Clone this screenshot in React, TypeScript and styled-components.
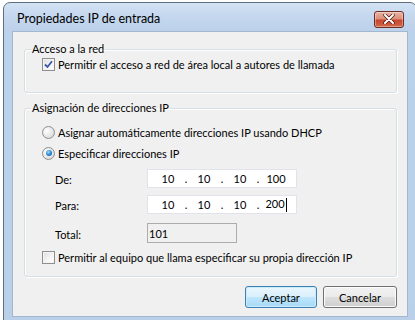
import { createGlobalStyle, styled } from "styled-components";

const GlobalStyle = createGlobalStyle`
  html, body {
    margin: 0;
    padding: 0;
    background: #ffffff;
  }
  body {
    font-family: Lato, "Liberation Sans", sans-serif;
    font-size: 11px;
    color: #000;
  }
`;

const Screen = styled.div`
  width: 415px;
  height: 320px;
  overflow: hidden;
  padding: 2px 0 0 3px;
  box-sizing: border-box;
`;

const Window = styled.div`
  width: 414px;
  height: 324px;
  box-sizing: border-box;
  border: 1px solid #5f6f82;
  border-radius: 7px 7px 0 0;
  background: linear-gradient(180deg, #d3e2f4 0px, #c4d7ee 14px, #bcd2ea 28px, #bad0e9 100%);
  display: flex;
  flex-direction: column;
  padding: 0 8px 8px 8px;
`;

const TitleBar = styled.div`
  height: 28px;
  display: flex;
  align-items: center;
  justify-content: space-between;
  padding: 0 4px 0 5px;
`;

const Title = styled.span`
  font-size: 12.5px;
  color: #000;
  margin-top: 2px;
`;

const CloseButton = styled.button`
  width: 30px;
  height: 17px;
  margin-top: 4px;
  padding: 0;
  border: 1px solid #6e2c22;
  border-radius: 3px;
  background: linear-gradient(180deg, #e8b3a4 0%, #dd8f7b 45%, #c6462c 55%, #cf6a4b 100%);
  box-shadow: inset 0 0 0 1px rgba(255, 255, 255, 0.35);
  display: flex;
  align-items: center;
  justify-content: center;
`;

const Client = styled.div`
  flex: 1;
  background: #f0f0f0;
  border: 1px solid #a3b7cf;
  padding: 9px 10px 0 11px;
  display: flex;
  flex-direction: column;
`;

const Group = styled.fieldset<{ $gap?: number }>`
  margin: ${(p) => p.$gap ?? 0}px 0 0 0;
  padding: 0 0 ${(p) => (p.$gap ? 12 : 21)}px 17px;
  border: 1px solid #d5dfe5;
  border-radius: 3px;
  box-shadow: inset 1px 1px 0 #ffffff, 1px 1px 0 #ffffff;
  display: flex;
  flex-direction: column;
`;

const Legend = styled.legend`
  padding: 0 1px;
  margin-left: -11px;
  line-height: 16px;
  font-size: 11px;
`;

const Row = styled.label<{ $top?: number }>`
  display: flex;
  align-items: center;
  height: 14px;
  gap: 3px;
  margin-top: ${(p) => p.$top ?? 0}px;
  white-space: nowrap;
`;

const CheckBox = styled.span`
  width: 13px;
  height: 13px;
  box-sizing: border-box;
  border: 1px solid #8e8f8f;
  background: linear-gradient(135deg, #dcdcdc 0%, #f6f6f6 60%, #ffffff 100%);
  box-shadow: inset 0 0 0 1px #f4f4f4;
  display: flex;
  align-items: center;
  justify-content: center;
  flex-shrink: 0;
`;

const Radio = styled.span<{ $on?: boolean }>`
  width: 13px;
  height: 13px;
  box-sizing: border-box;
  border-radius: 50%;
  border: 1px solid #8f8f8f;
  background: radial-gradient(circle at 35% 35%, #ffffff 0%, #e6e6e6 55%, #cfcfcf 100%);
  display: flex;
  align-items: center;
  justify-content: center;
  flex-shrink: 0;
  &::after {
    content: "";
    display: ${(p) => (p.$on ? "block" : "none")};
    width: 6px;
    height: 6px;
    border-radius: 50%;
    background: radial-gradient(circle at 40% 35%, #a6dcff 0%, #2a8ad4 50%, #0f4f8e 100%);
  }
`;

const FieldRow = styled.div<{ $top: number }>`
  display: flex;
  align-items: center;
  margin-top: ${(p) => p.$top}px;
  margin-left: 13px;
`;

const FieldLabel = styled.span`
  width: 92px;
  padding-top: 2px;
`;

const IpBox = styled.div`
  width: 150px;
  height: 19px;
  box-sizing: border-box;
  border: 1px solid #e2e3ea;
  background: #ffffff;
  display: flex;
  align-items: center;
  padding-left: 6px;
`;

const Octet = styled.span`
  width: 28px;
  text-align: center;
  white-space: nowrap;
`;

const Dot = styled.span`
  width: 8px;
  text-align: center;
`;

const Caret = styled.span`
  display: inline-block;
  width: 1px;
  height: 14px;
  background: #000;
  vertical-align: middle;
  margin-left: 1px;
`;

const TotalBox = styled.div`
  width: 90px;
  height: 20px;
  box-sizing: border-box;
  border: 1px solid #adadad;
  background: #f0f0f0;
  padding-left: 1px;
  display: flex;
  align-items: center;
`;

const Buttons = styled.div`
  display: flex;
  justify-content: flex-end;
  gap: 6px;
  margin-top: 9px;
`;

const Button = styled.button<{ $primary?: boolean }>`
  width: ${(p) => (p.$primary ? 72 : 74)}px;
  height: 22px;
  padding: 0;
  font-family: inherit;
  font-size: 11px;
  color: #000;
  border-radius: 3px;
  border: 1px solid ${(p) => (p.$primary ? "#3c7fb1" : "#707070")};
  background: ${(p) =>
    p.$primary
      ? "linear-gradient(180deg, #eaf6fd 0%, #d9f0fc 50%, #bee6fd 51%, #a7d9f5 100%)"
      : "linear-gradient(180deg, #f2f2f2 0%, #ebebeb 50%, #dddddd 51%, #cfcfcf 100%)"};
  box-shadow: inset 0 0 0 1px ${(p) => (p.$primary ? "#c9ecfd" : "#fcfcfc")};
`;

const octets = (values: string[], caret?: boolean) =>
  values.map((v, i) => (
    <span key={i} style={{ display: "contents" }}>
      {i > 0 && <Dot>.</Dot>}
      <Octet>
        {v}
        {caret && i === values.length - 1 && <Caret />}
      </Octet>
    </span>
  ));

const Check = () => (
  <svg width="9" height="9" viewBox="0 0 9 9">
    <path d="M1 4.5 L3.5 7 L8 1.2" fill="none" stroke="#3b58a8" strokeWidth="1.8" />
  </svg>
);

export default function App() {
  return (
    <>
      <GlobalStyle />
      <Screen>
        <Window>
          <TitleBar>
            <Title>Propiedades IP de entrada</Title>
            <CloseButton aria-label="Cerrar">
              <svg width="12" height="10" viewBox="0 0 12 10">
                <path d="M2 1 L10 9 M10 1 L2 9" stroke="#4a1a12" strokeWidth="3.4" strokeLinecap="round" />
                <path d="M2 1 L10 9 M10 1 L2 9" stroke="#ffffff" strokeWidth="2" strokeLinecap="round" />
              </svg>
            </CloseButton>
          </TitleBar>
          <Client>
            <Group>
              <Legend>Acceso a la red</Legend>
              <Row>
                <CheckBox>
                  <Check />
                </CheckBox>
                Permitir el acceso a red de área local a autores de llamada
              </Row>
            </Group>
            <Group $gap={7}>
              <Legend>Asignación de direcciones IP</Legend>
              <Row $top={9}>
                <Radio />
                Asignar automáticamente direcciones IP usando DHCP
              </Row>
              <Row $top={7}>
                <Radio $on />
                Especificar direcciones IP
              </Row>
              <FieldRow $top={9}>
                <FieldLabel>De:</FieldLabel>
                <IpBox>{octets(["10", "10", "10", "100"])}</IpBox>
              </FieldRow>
              <FieldRow $top={7}>
                <FieldLabel>Para:</FieldLabel>
                <IpBox>{octets(["10", "10", "10", "200"], true)}</IpBox>
              </FieldRow>
              <FieldRow $top={9}>
                <FieldLabel>Total:</FieldLabel>
                <TotalBox>101</TotalBox>
              </FieldRow>
              <Row $top={7}>
                <CheckBox />
                Permitir al equipo que llama especificar su propia dirección IP
              </Row>
            </Group>
            <Buttons>
              <Button $primary>Aceptar</Button>
              <Button>Cancelar</Button>
            </Buttons>
          </Client>
        </Window>
      </Screen>
    </>
  );
}
